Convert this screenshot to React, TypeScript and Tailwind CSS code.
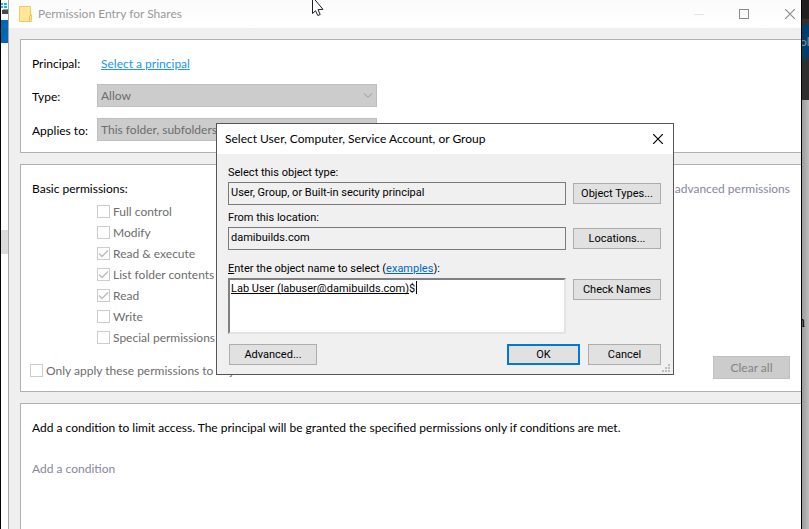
import { ReactNode } from "react";

const permissions = [
  { label: "Full control", checked: false },
  { label: "Modify", checked: false },
  { label: "Read & execute", checked: true },
  { label: "List folder contents", checked: true },
  { label: "Read", checked: true },
  { label: "Write", checked: false },
  { label: "Special permissions", checked: false },
];

const CloseIcon = ({ className = "" }: { className?: string }) => (
  <svg viewBox="0 0 10 10" className={`h-[10px] w-[10px] ${className}`} fill="none" stroke="currentColor" strokeWidth="1.2">
    <path d="M0 0 L10 10 M10 0 L0 10" />
  </svg>
);

const FolderIcon = () => (
  <svg viewBox="0 0 13 16" className="h-4 w-[13px]">
    <path d="M0.5 0.5 H11.5 V9 H12.5 V15.5 H0.5 Z" fill="#ffe793" stroke="#ecca68" />
    <path d="M10.5 15.5 V10 L12.5 9" fill="none" stroke="#e6bd52" />
  </svg>
);

const Cursor = () => (
  <svg viewBox="0 0 12 17" className="absolute left-[312px] top-0 z-20 h-[17px] w-3">
    <path
      d="M0.5 -3 L0.5 13.5 L3.5 10.7 L5.8 15.5 L8.2 14.5 L6 9.7 L11 9.3 Z"
      fill="#fff"
      stroke="#1c1c28"
    />
  </svg>
);

const CheckRow = ({ label, checked = false }: { label: string; checked?: boolean }) => (
  <label className="flex h-[21px] items-center gap-[3px] text-[#6d6d6d]">
    <span className="relative h-[13px] w-[13px] shrink-0">
      <input
        type="checkbox"
        defaultChecked={checked}
        disabled
        className="block h-[13px] w-[13px] appearance-none border border-[#cccccc] bg-white"
      />
      {checked && (
        <svg viewBox="0 0 13 13" className="absolute inset-0" fill="none" stroke="#bcbcbc" strokeWidth="1.4">
          <path d="M2 6.5 L5 9.5 L11 3.5" />
        </svg>
      )}
    </span>
    <span className="whitespace-nowrap">{label}</span>
  </label>
);

const SelectRow = ({ id, label, value }: { id: string; label: string; value: string }) => (
  <div className="flex h-[23px] items-center">
    <label htmlFor={id} className="w-[65px] shrink-0 pt-[2px]">
      {label}
    </label>
    <div className="relative w-[280px]">
      <select
        id={id}
        disabled
        className="block h-[23px] w-full appearance-none border border-[#bfbfbf] bg-[#cccccc] px-[3px] text-[#6d6d6d] opacity-100"
      >
        <option>{value}</option>
      </select>
      <svg
        viewBox="0 0 8 5"
        className="pointer-events-none absolute right-[5px] top-[9px] h-[5px] w-2"
        fill="none"
        stroke="#9b9b9b"
      >
        <path d="M0 0.5 L4 4.3 L8 0.5" />
      </svg>
    </div>
  </div>
);

const Panel = ({ children, className = "" }: { children: ReactNode; className?: string }) => (
  <section className={`border border-r-0 border-[#b0b0b0] bg-white pl-[11px] pr-[11px] pt-3 ${className}`}>
    {children}
  </section>
);

const DialogButton = ({ children, className = "border border-[#adadad]" }: { children: ReactNode; className?: string }) => (
  <button className={`h-[21px] w-full whitespace-nowrap bg-[#e1e1e1] ${className}`}>{children}</button>
);

const SelectUserDialog = () => (
  <div
    role="dialog"
    aria-labelledby="dialog-title"
    className="absolute left-[216px] top-[123px] z-10 w-[458px] border border-[#555555] bg-[#f0f0f0] text-black"
  >
    <div className="flex h-[30px] items-center justify-between bg-white pl-2 pr-[10px]">
      <h2 id="dialog-title">Select User, Computer, Service Account, or Group</h2>
      <button aria-label="Close">
        <CloseIcon />
      </button>
    </div>

    <div className="pb-[9px] pl-[11px] pr-3 pt-[11px] font-['Roboto','Liberation_Sans',sans-serif] text-[11px]">
      <label htmlFor="object-type" className="block h-[17px] leading-4">
        Select this object type:
      </label>
      <div className="mb-[5px] flex items-center gap-[7px]">
        <input
          id="object-type"
          readOnly
          defaultValue="User, Group, or Built-in security principal"
          className="h-[23px] min-w-0 flex-1 border border-[#7a7a7a] bg-[#f0f0f0] px-[2px] pb-[3px]"
        />
        <div className="w-[88px]">
          <DialogButton>Object Types...</DialogButton>
        </div>
      </div>

      <label htmlFor="location" className="block h-[17px] leading-4">
        From this location:
      </label>
      <div className="mb-[11px] flex items-center gap-[7px]">
        <input
          id="location"
          readOnly
          defaultValue="damibuilds.com"
          className="h-[23px] min-w-0 flex-1 border border-[#7a7a7a] bg-[#f0f0f0] px-[2px] pb-[3px]"
        />
        <div className="w-[88px]">
          <DialogButton>Locations...</DialogButton>
        </div>
      </div>

      <div className="h-[17px] leading-4">
        <label htmlFor="object-name">
          <span className="underline">E</span>nter the object name to select
        </label>{" "}
        (
        <a href="#examples" className="text-[#0066cc] underline">
          examples
        </a>
        ):
      </div>
      <div className="flex items-start gap-[7px]">
        <div className="relative flex-1">
          <textarea
            id="object-name"
            defaultValue="Lab User (labuser@damibuilds.com)$"
            className="block h-14 w-full resize-none border-2 border-b-[#e3e3e3] border-l-[#808080] border-r-[#e3e3e3] border-t-[#808080] bg-white px-px py-px leading-4"
          />
          {/* resolved name underline and caret */}
          <span className="absolute left-[3px] top-[15px] h-px w-[178px] bg-black" />
          <span className="absolute left-[188px] top-[3px] h-[13px] w-px bg-black" />
        </div>
        <div className="w-[88px] pt-px">
          <DialogButton>Check Names</DialogButton>
        </div>
      </div>

      <div className="mt-[10px] flex gap-2">
        <div className="mr-auto w-[89px] pl-px">
          <DialogButton>Advanced...</DialogButton>
        </div>
        <div className="w-[73px]">
          <DialogButton className="border-2 border-[#0078d7]">OK</DialogButton>
        </div>
        <div className="w-[73px]">
          <DialogButton>Cancel</DialogButton>
        </div>
      </div>
    </div>

    <svg viewBox="0 0 8 8" className="absolute bottom-[2px] right-[3px] h-2 w-2" fill="#bdbdbd">
      <path d="M6 0h2v2H6z M3 3h2v2H3z M6 3h2v2H6z M0 6h2v2H0z M3 6h2v2H3z M6 6h2v2H6z" />
    </svg>
  </div>
);

const App = () => {
  return (
    <div className="relative flex h-screen overflow-hidden bg-white font-['Lato','Open_Sans',sans-serif] text-[12px] leading-4 text-black">
      {/* Window behind, left edge */}
      <div className="flex w-2 shrink-0 flex-col border-l border-black bg-white">
        <svg viewBox="0 0 7 20" className="h-5 w-[7px]">
          <path d="M0 3h2v2H0z M3 3h3v2H3z M0 6h2v2H0z M3 6h3v2H3z" fill="#19b5ea" />
          <path d="M2 9h5v1H2z" fill="#9a9a9a" />
          <path d="M1 10h6v4H1z" fill="#4a4a4a" />
        </svg>
        <div className="h-[23px] bg-[#0067b3]" />
        <div className="mt-[187px] h-6 bg-[#dadada]" />
      </div>

      {/* Permission entry window */}
      <main className="flex min-w-0 flex-1 flex-col border-l border-r border-l-[#a8a8a8] border-r-black bg-[#efefef]">
        <header className="flex h-7 shrink-0 items-center bg-gradient-to-b from-[#fbfbfb] to-white pl-[10px] pr-[6px] text-[#999999]">
          <FolderIcon />
          <h1 className="ml-[6px]">Permission Entry for Shares</h1>
          <div className="ml-auto flex items-center">
            <button aria-label="Minimize" className="mr-[35px]">
              <span className="block h-px w-[10px] bg-[#e4e4e4]" />
            </button>
            <button aria-label="Maximize" className="mr-9">
              <span className="block h-[10px] w-[10px] border border-[#8c8c8c]" />
            </button>
            <button aria-label="Close">
              <CloseIcon className="text-[#8c8c8c]" />
            </button>
          </div>
        </header>

        <div className="flex flex-1 flex-col pl-[11px] pt-[11px]">
          <Panel className="mb-[11px] pb-[11px]">
            <div className="mb-2 flex h-6 items-center">
              <span className="w-[65px] shrink-0">Principal:</span>
              <a href="#principal" className="ml-1 text-[#1a96f0] underline">
                Select a principal
              </a>
            </div>
            <div className="flex flex-col gap-[11px]">
              <SelectRow id="type" label="Type:" value="Allow" />
              <SelectRow id="applies-to" label="Applies to:" value="This folder, subfolders and files" />
            </div>
          </Panel>

          <Panel className="mb-[11px] pb-3">
            <div className="flex h-6 items-center justify-between">
              <h2>Basic permissions:</h2>
              <a href="#advanced" className="text-[#8587a0]">
                Show advanced permissions
              </a>
            </div>
            <div className="pl-[65px]">
              {permissions.map((p) => (
                <CheckRow key={p.label} label={p.label} checked={p.checked} />
              ))}
            </div>
            <div className="-ml-[2px] mt-2 flex h-[23px] items-start justify-between">
              <div className="pt-1">
                <CheckRow label="Only apply these permissions to objects and/or containers within this container" />
              </div>
              <button
                disabled
                className="h-[23px] w-[77px] border border-[#bfbfbf] bg-[#cccccc] text-[#838383]"
              >
                Clear all
              </button>
            </div>
          </Panel>

          <Panel className="flex-1 border-b-0">
            <p className="h-6 leading-6">
              Add a condition to limit access. The principal will be granted the specified permissions only if
              conditions are met.
            </p>
            <a href="#condition" className="mt-[17px] block leading-6 text-[#8587a0]">
              Add a condition
            </a>
          </Panel>
        </div>
      </main>

      {/* Window behind, right edge */}
      <div className="flex w-[7px] shrink-0 flex-col overflow-hidden bg-gradient-to-r from-[#9c9c9c] to-[#bdbdbd]">
        <div className="h-[19px] bg-[#202020]" />
        <div className="h-[6px] bg-[#303030]" />
        <div className="h-[34px] bg-[#003e68] text-[12px] text-[#8796a5] leading-[34px]">
          <span className="-ml-[2px]">ol</span>
        </div>
        <div className="h-[41px] bg-[#2f2f2f]" />
        <div className="-ml-[5px] mt-[212px] font-['Liberation_Serif',serif] text-[16px] leading-5 text-black">n</div>
      </div>

      <SelectUserDialog />
      <Cursor />
    </div>
  );
};

export default App;
